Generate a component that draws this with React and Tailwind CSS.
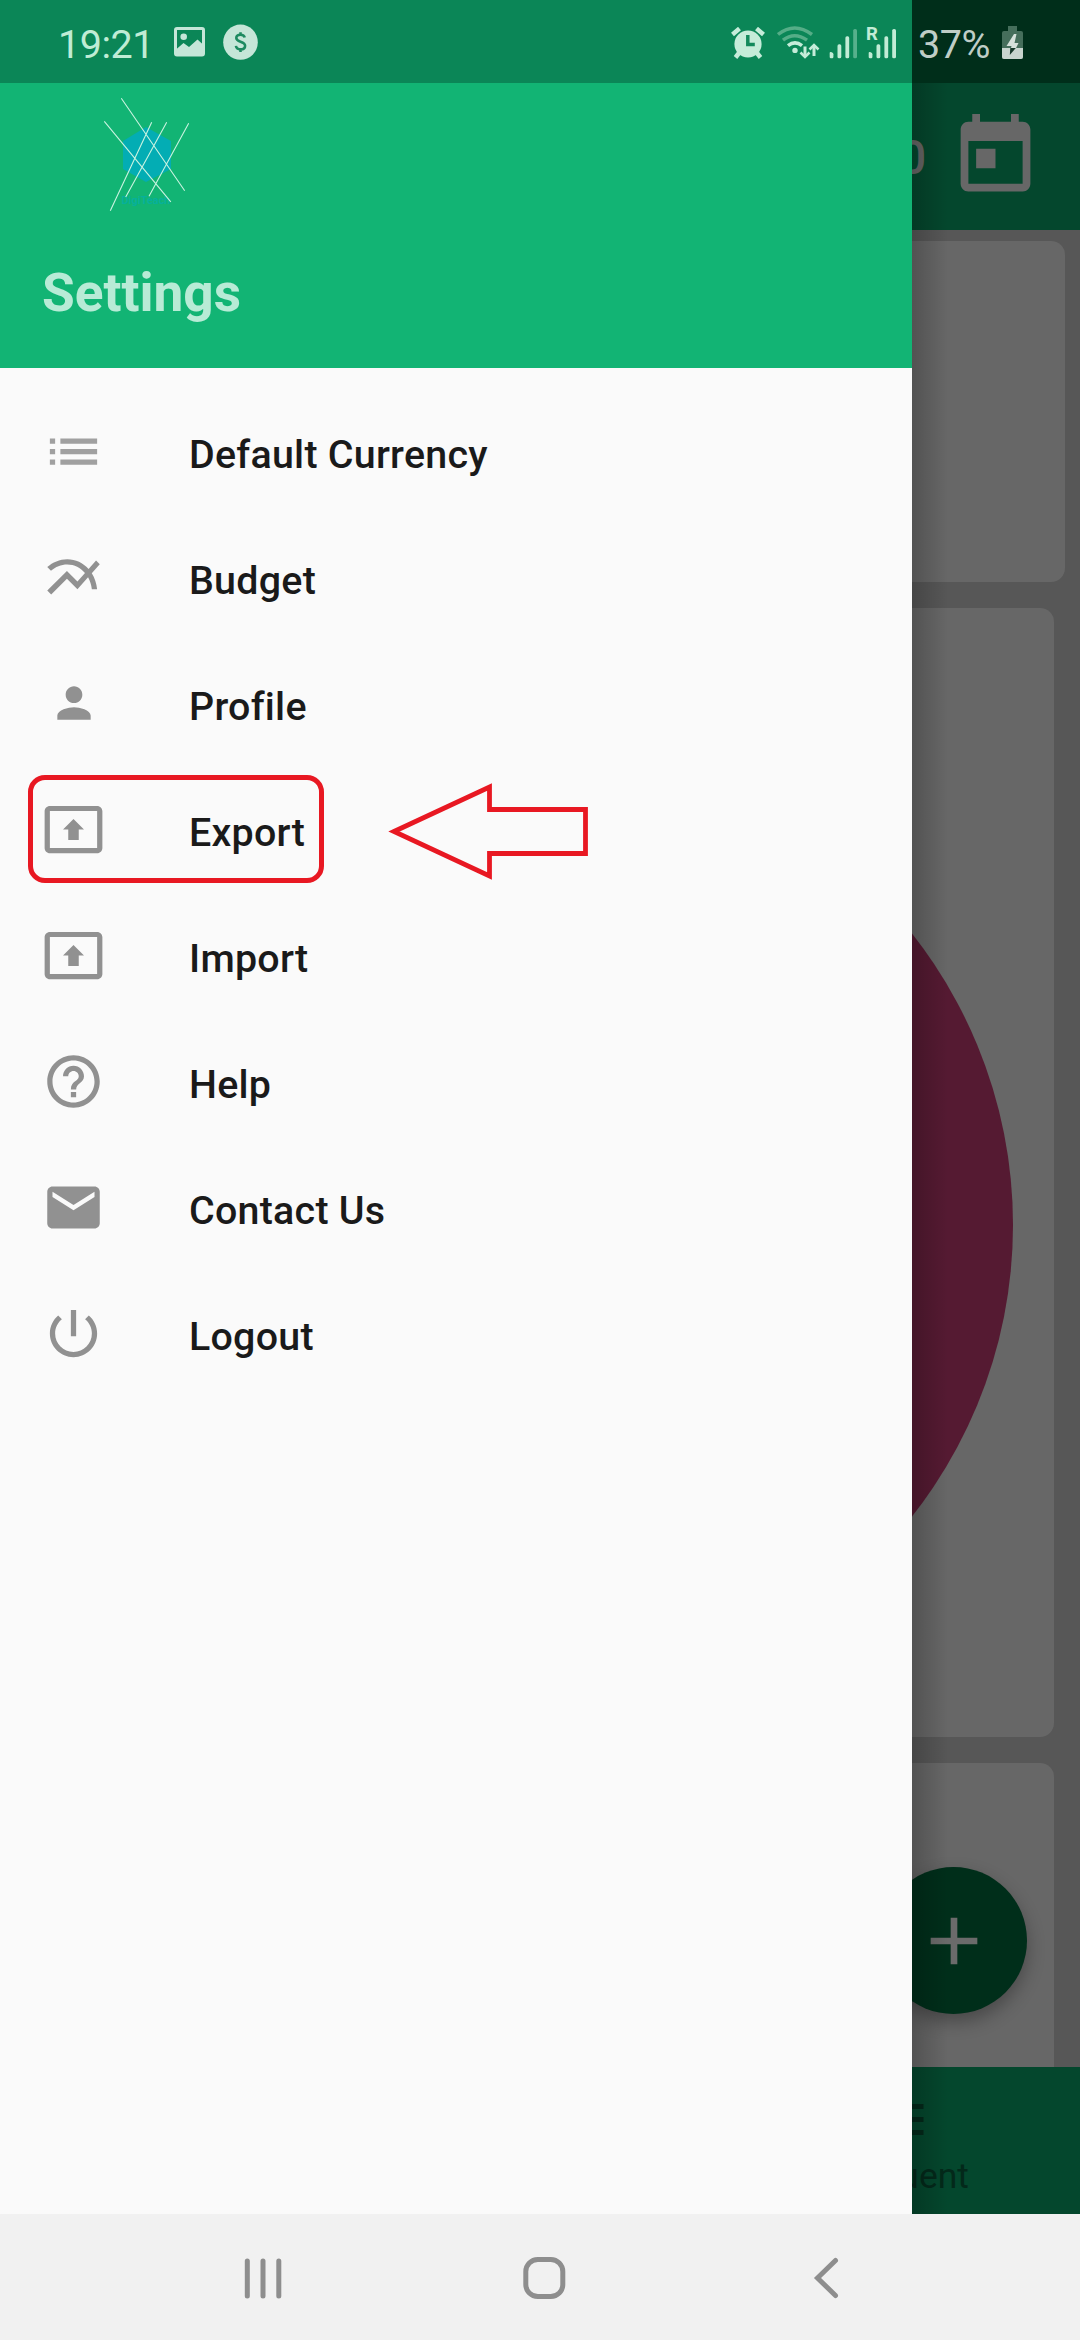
import React from "react";

const ICONS = {
  list: "M3 13h2v-2H3v2zm0 4h2v-2H3v2zm0-8h2V7H3v2zm4 4h14v-2H7v2zm0 4h14v-2H7v2zM7 7v2h14V7H7z",
  chart:
    "M22 6.92l-1.41-1.41-2.85 3.21C15.68 6.4 12.83 5 9.61 5 6.72 5 4.07 6.16 2 8l1.42 1.42C5.12 7.93 7.27 7 9.61 7c2.74 0 5.09 1.26 6.77 3.24l-2.88 3.24-4-4L2 16.99l1.5 1.5 6-6.01 4 4 4.05-4.55c.75 1.35 1.25 2.9 1.44 4.55H21c-.22-2.3-.95-4.39-2.04-6.14L22 6.92z",
  person:
    "M12 12c2.21 0 4-1.79 4-4s-1.79-4-4-4-4 1.79-4 4 1.79 4 4 4zm0 2c-2.67 0-8 1.34-8 4v2h16v-2c0-2.66-5.33-4-8-4z",
  present:
    "M21 3H3c-1.11 0-2 .89-2 2v14c0 1.11.89 2 2 2h18c1.11 0 2-.89 2-2V5c0-1.11-.89-2-2-2zm0 16.02H3V4.98h18v14.04zM10 12H8l4-4 4 4h-2v4h-4v-4z",
  help:
    "M11 18h2v-2h-2v2zm1-16C6.48 2 2 6.48 2 12s4.48 10 10 10 10-4.48 10-10S17.52 2 12 2zm0 18c-4.41 0-8-3.59-8-8s3.59-8 8-8 8 3.59 8 8-3.59 8-8 8zm0-14c-2.21 0-4 1.79-4 4h2c0-1.1.9-2 2-2s2 .9 2 2c0 2-3 1.75-3 5h2c0-2.25 3-2.5 3-5 0-2.21-1.79-4-4-4z",
  mail:
    "M20 4H4c-1.1 0-1.99.9-1.99 2L2 18c0 1.1.9 2 2 2h16c1.1 0 2-.9 2-2V6c0-1.1-.9-2-2-2zm0 4l-8 5-8-5V6l8 5 8-5v2z",
  power:
    "M13 3h-2v10h2V3zm4.83 2.17l-1.42 1.42C17.99 7.86 19 9.81 19 12c0 3.87-3.13 7-7 7s-7-3.13-7-7c0-2.19 1.01-4.14 2.58-5.42L6.17 5.17C4.23 6.82 3 9.26 3 12c0 4.97 4.03 9 9 9s9-4.03 9-9c0-2.74-1.23-5.18-3.17-6.83z",
  today:
    "M19 3h-1V1h-2v2H8V1H6v2H5c-1.11 0-1.99.9-1.99 2L3 19c0 1.1.89 2 2 2h14c1.1 0 2-.9 2-2V5c0-1.1-.9-2-2-2zm0 16H5V8h14v11zM7 10h5v5H7z",
  add: "M19 13h-6v6h-2v-6H5v-2h6V5h2v6h6v2z",
};

const MENU = [
  { label: "Default Currency", icon: "list", faint: true },
  { label: "Budget", icon: "chart" },
  { label: "Profile", icon: "person", small: true },
  { label: "Export", icon: "present", marked: true },
  { label: "Import", icon: "present" },
  { label: "Help", icon: "help" },
  { label: "Contact Us", icon: "mail" },
  { label: "Logout", icon: "power" },
];

function Icon({ name, className }) {
  return (
    <svg viewBox="0 0 24 24" fill="currentColor" className={className}>
      <path d={ICONS[name]} />
    </svg>
  );
}

function Signal({ weak, roaming }) {
  return (
    <svg viewBox="0 0 30 34" className="h-[34px] w-[30px] shrink-0 overflow-visible" fill="#c2ecd6">
      <path d="M1.7 28q0-1.300 1.200-1l.8.200q1.700.6 1.700 2V32q0 1.300-1.200 1.300H2.900q-1.200 0-1.200-1.300z" />
      <rect x="9.500" y="19.300" width="3.800" height="14" rx="1.600" />
      <rect x="17.400" y="11.300" width="3.800" height="22" rx="1.600" />
      <rect x="25.200" y="4" width="3.800" height="29.300" rx="1.600" opacity={weak ? 0.42 : 1} />
      {roaming && (
        <text x="-1" y="15.400" fontSize="18.500" fontWeight="700" fontFamily="Roboto, sans-serif">
          R
        </text>
      )}
    </svg>
  );
}

function StatusBar() {
  return (
    <div className="flex h-[83px] shrink-0">
      <div className="flex w-[912px] items-start bg-[#0b8657] text-[#bfecd5]">
        <span className="ml-[58px] mt-[22px] w-[116px] text-[39.5px] leading-[46px] tracking-[-0.5px]">19:21</span>
        <svg viewBox="0 0 31 30" className="mt-[27px] h-[30px] w-[31px]" fill="#c5e6d8">
          <rect x="1.500" y="1.500" width="28" height="26.500" rx="1.500" fill="none" stroke="#c5e6d8" strokeWidth="3" />
          <circle cx="9.700" cy="9.700" r="3.300" />
          <path d="M2 22.500l7.500-6.500 5.500 4 8.500-7.500 5.500 5V28H2z" />
        </svg>
        <svg viewBox="0 0 35 36" className="ml-[18px] mt-[24px] h-[36px] w-[35px]">
          <ellipse cx="17.500" cy="18.200" rx="17.300" ry="17.600" fill="#c5e6d8" />
          <path
            d="M21.700 13.600c-.4-2-2-2.900-4.200-2.900-2.500 0-4.200 1.300-4.200 3.300 0 4.600 8.800 2.700 8.800 7.700 0 2.300-1.900 3.700-4.500 3.700-2.500 0-4.300-1.200-4.700-3.500M17.500 8.200v2.500M17.500 25.400v2.500"
            fill="none"
            stroke="#1d8a60"
            strokeWidth="2.600"
          />
        </svg>
        <svg viewBox="0 0 34 32" className="ml-[473px] mt-[27px] h-[32px] w-[34px]">
          <g stroke="#c5ecd9" strokeWidth="4.500">
            <path d="M1.500 7.500l7-6M32.500 7.500l-7-6M8 26l-3.500 4.500M26 26l3.500 4.500" />
          </g>
          <circle cx="17" cy="17" r="13.600" fill="#c5ecd9" />
          <path d="M16.800 8v9.500h7" fill="none" stroke="#12895b" strokeWidth="3.500" />
        </svg>
        <svg viewBox="0 0 43 34" className="ml-[12px] mt-[26px] h-[34px] w-[43px]" fill="none" strokeWidth="3.500">
          <path d="M1 8.500q16.500-13 34 0M6 14.200q11.500-9 24 0" stroke="#55ad87" />
          <path d="M11 19.600q7-5.500 14 0" stroke="#c5ecd9" />
          <circle cx="18" cy="24.400" r="2.700" fill="#c5ecd9" />
          <path d="M28 20.500v9M37 30v-9" stroke="#c5ecd9" strokeWidth="3" />
          <path d="M23.500 26.500l4.500 4.500 4.500-4.500M32.500 23.500l4.500-4.500 4.500 4.500" stroke="#c5ecd9" strokeWidth="2.600" />
        </svg>
        <div className="ml-[8px] mt-[25px] flex gap-[9px]">
          <Signal weak />
          <Signal roaming />
        </div>
      </div>
      <div className="flex flex-1 items-start bg-[#002e1a] text-[#bfcdc6]">
        <span className="ml-[6px] mt-[22px] w-[84px] text-[39.5px] leading-[46px] tracking-[-0.4px]">37%</span>
        <svg viewBox="0 0 21 33" className="mt-[26px] h-[33px] w-[21px]">
          <path d="M6 0h9v5H6z" fill="#456e5b" />
          <rect y="5" width="21" height="28" rx="2" fill="#456e5b" />
          <path d="M0 22h21v9q0 2-2 2H2q-2 0-2-2z" fill="#c8d4ce" />
          <path d="M12 8l-7.500 12h5L9 22h5l2.500-5h-4l2-9z" fill="#d5e0da" />
          <path d="M8.300 22h5.500l-6 7z" fill="#17382a" />
        </svg>
      </div>
    </div>
  );
}

function Logo() {
  return (
    <svg viewBox="90 83 120 142" className="ml-[90px] h-[142px] w-[120px]">
      <path d="M146 127l25 14v28l-25 13-23-13v-28z" fill="#03adb4" />
      <text
        x="121.500"
        y="204"
        fontSize="11"
        fontWeight="700"
        textLength="49"
        lengthAdjust="spacingAndGlyphs"
        fontFamily="Roboto, sans-serif"
        fill="#06b09c"
      >
        DigiTeach
      </text>
      <path
        d="M121.300 98.300l63.400 92.400M104.300 121.300l66.500 80.500M151.700 122.300l-41.400 88.400M166.700 122.300l-41 74.700M188.700 123.300l-39.700 73"
        stroke="#c9f3e0"
        strokeWidth="1.100"
        fill="none"
      />
    </svg>
  );
}

function MenuRow({ item }) {
  return (
    <li className="relative flex h-[126px] items-center">
      <div className={item.faint ? "ml-[42px] flex w-[63px] justify-center text-[#a0a0a0]" : "ml-[42px] flex w-[63px] justify-center text-[#919191]"}>
        <Icon name={item.icon} className={item.small ? "size-[50px]" : "size-[63px]"} />
      </div>
      <span className="ml-[84px] mt-[8px] text-[39.4px] font-medium leading-[46px] tracking-[0.25px] text-[#1a1a1a]">{item.label}</span>
      {item.marked && (
        <>
          <div className="absolute left-[28px] top-[9px] h-[108px] w-[296px] rounded-[17px] border-[5px] border-[#e81822]" />
          <svg viewBox="386 780 206 104" className="absolute left-[386px] top-[14px] h-[104px] w-[206px]">
            <path
              d="M394 831.500L489.500 787v22.500h96v44h-96V876z"
              fill="none"
              stroke="#e81822"
              strokeWidth="4.800"
            />
          </svg>
        </>
      )}
    </li>
  );
}

function Drawer() {
  return (
    <aside className="flex w-[912px] shrink-0 flex-col bg-[#fafafa]">
      <header className="flex h-[285px] shrink-0 flex-col bg-[#12b474]">
        <Logo />
        <h1 className="ml-[42px] mt-[37px] text-[53.2px] font-bold leading-[62px] text-[#b8ebd6]">Settings</h1>
      </header>
      <ul className="pt-[20px]">
        {MENU.map((item) => (
          <MenuRow key={item.label} item={item} />
        ))}
      </ul>
    </aside>
  );
}

function DimmedPage() {
  return (
    <main className="relative flex flex-1 flex-col overflow-hidden bg-[#575757]">
      <div className="flex h-[147px] shrink-0 items-center bg-[#04472d] text-[#676767]">
        <span className="ml-[-13px] mt-[3px] text-[48px] font-medium leading-[56px]">0</span>
        <Icon name="today" className="ml-auto mr-[38px] size-[93px]" />
      </div>
      <div className="mt-[11px] h-[341px] w-[153px] shrink-0 rounded-r-[14px] bg-[#676767]" />
      <div className="mt-[26px] flex h-[1129px] w-[142px] shrink-0 items-center overflow-hidden rounded-r-[14px] bg-[#676767]">
        <div className="ml-[-841px] mt-[105px] size-[942px] shrink-0 rounded-full bg-[#551a32]" />
      </div>
      <div className="mt-[26px] h-[304px] w-[142px] shrink-0 rounded-tr-[14px] bg-[#676767]" />
      <nav className="flex flex-1 flex-col items-start bg-[#04472d] text-[#03291a]">
        <svg viewBox="0 0 12 32" className="mt-[37px] h-[32px] w-[12px]" fill="currentColor">
          <path d="M0 0h11.500v5H0zM0 13h11.500v5H0zM0 26h11.500v5H0z" />
        </svg>
        <span className="mt-[19px] flex w-[57px] justify-end text-[35.5px] leading-[42px]">Frequent</span>
      </nav>
      <button className="absolute bottom-[200px] left-[-32px] flex size-[147px] items-center justify-center rounded-full bg-[#002e1a] text-[#6b6b6b] shadow-[0_8px_18px_rgba(0,0,0,0.3)]">
        <Icon name="add" className="size-[80px]" />
      </button>
      <div className="absolute inset-y-0 left-0 w-[36px] bg-linear-to-r from-black/20 to-transparent" />
    </main>
  );
}

function NavBar() {
  return (
    <div className="flex h-[126px] shrink-0 items-center bg-[#f1f1f1]">
      <svg viewBox="0 0 38 42" className="ml-[244px] mt-[2px] h-[42px] w-[38px]" stroke="#8e8e8e" strokeWidth="5" strokeLinecap="round">
        <path d="M3.300 4v35M19 4v35M34.800 4v35" />
      </svg>
      <svg viewBox="0 0 44 44" className="ml-[240px] mt-[2px] h-[44px] w-[44px]" fill="none">
        <rect x="3.800" y="3.500" width="37" height="37" rx="12" stroke="#8e8e8e" strokeWidth="5" />
      </svg>
      <svg viewBox="0 0 26 42" className="ml-[247px] mt-[2px] h-[42px] w-[26px]" fill="none">
        <path d="M22.500 3.500L4.500 21l18 17.500" stroke="#8e8e8e" strokeWidth="5" strokeLinecap="round" />
      </svg>
    </div>
  );
}

export default function App() {
  return (
    <div className="flex h-[2340px] w-[1080px] flex-col overflow-hidden font-['Roboto',sans-serif]">
      <StatusBar />
      <div className="flex min-h-0 flex-1">
        <Drawer />
        <DimmedPage />
      </div>
      <NavBar />
    </div>
  );
}
